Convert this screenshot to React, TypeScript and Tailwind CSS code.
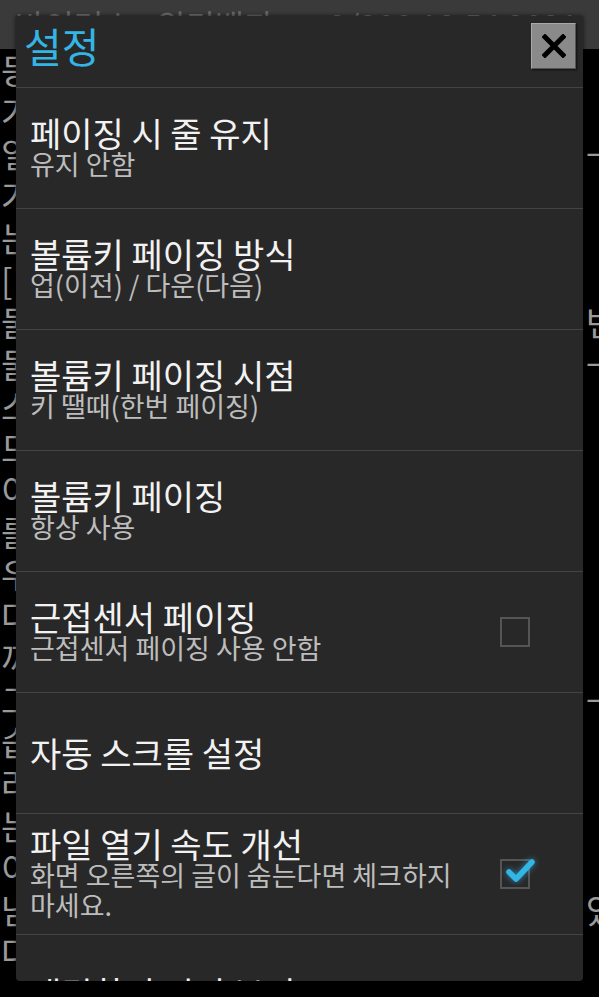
import React from "react";

const leftChars = ["등","가","일","가","는","[","물","물","스","므","이","를","우","다","까","그","습","라","는","이","남","다"];
const rightChars: Record<number, string> = { 2: "ㅡ", 6: "번", 7: "ㅡ", 12: "ㅣ", 15: "ㅡ", 20: "있" };

type Row = { title: string; sub?: React.ReactNode; check?: "on" | "off" };

const rows: Row[] = [
  { title: "페이징 시 줄 유지", sub: "유지 안함" },
  { title: "볼륨키 페이징 방식", sub: "업(이전) / 다운(다음)" },
  { title: "볼륨키 페이징 시점", sub: "키 땔때(한번 페이징)" },
  { title: "볼륨키 페이징", sub: "항상 사용" },
  { title: "근접센서 페이징", sub: "근접센서 페이징 사용 안함", check: "off" },
  { title: "자동 스크롤 설정" },
  {
    title: "파일 열기 속도 개선",
    sub: (
      <>
        화면 오른쪽의 글이 숨는다면 체크하지
        <br />
        마세요.
      </>
    ),
    check: "on",
  },
];

const FONT = { fontFamily: '"Noto Sans CJK KR", "Noto Sans", sans-serif' };

function CheckBox({ on }: { on: boolean }) {
  return (
    <div className="relative w-[30px] h-[30px] border-2 border-[#555555] shrink-0">
      {on && (
        <svg
          className="absolute left-[-2px] top-[-2px] overflow-visible"
          width="40"
          height="30"
          viewBox="0 0 40 30"
          style={{ filter: "drop-shadow(0 0 3px rgba(51,181,229,0.7))" }}
        >
          <polyline
            points="9,13 16,20 32,3"
            fill="none"
            stroke="#33b5e5"
            strokeWidth="5.5"
            strokeLinecap="round"
            strokeLinejoin="round"
          />
        </svg>
      )}
    </div>
  );
}

export default function App() {
  return (
    <div className="relative w-[599px] h-[997px] bg-black overflow-hidden" style={FONT}>
      {/* background reader page */}
      <div className="h-[49px] bg-[#3a3a3a] flex justify-between items-start pt-[4px] px-[15px] text-[32px] leading-[40px] text-[#6c6c6c]">
        <span>바이러스 : 위키백과</span>
        <span className="mr-[6px]">9/200 18:54 2021</span>
      </div>
      <div className="flex flex-col text-[34px] leading-[42px] text-[#9a9a9a]">
        {leftChars.map((c, i) => (
          <div key={i} className="flex justify-between pl-[1px] mr-[-18px]">
            <span>{c}</span>
            <span>{rightChars[i] ?? ""}</span>
          </div>
        ))}
      </div>

      {/* dialog */}
      <div className="absolute left-[16px] top-[16px] w-[567px] h-[965px] bg-[#282828] rounded-b-[4px] shadow-[0_0_4px_rgba(0,0,0,0.7)] overflow-hidden flex flex-col">
        <div className="h-[71px] shrink-0 flex justify-between items-start">
          <div className="pl-[8px] pt-[0px] text-[41px] leading-[58px] text-[#33b5e5]">설정</div>
          <div className="mt-[7px] mr-[7px] w-[45px] h-[46px] bg-[#8a8a8a] border border-t-[#a8a8a8] border-l-[#a8a8a8] border-r-[#555555] border-b-[#555555] shadow-[1px_1px_2px_rgba(0,0,0,0.6)] flex items-center justify-center">
            <svg width="24" height="24" viewBox="0 0 24 24">
              <path d="M3 3 L21 21 M21 3 L3 21" stroke="#000" strokeWidth="5" strokeLinecap="square" />
            </svg>
          </div>
        </div>
        <div className="h-px bg-[#434343] shrink-0" />
        {rows.map((r, i) => (
          <React.Fragment key={i}>
            <div className="h-[120px] shrink-0 flex items-center justify-between pl-[14px] pr-[53px]">
              <div className="flex flex-col">
                <div className="text-[34px] leading-[32px] text-[#f2f2f2]">{r.title}</div>
                {r.sub && <div className="text-[27px] leading-[30px] text-[#bdbdbd]">{r.sub}</div>}
              </div>
              {r.check && <CheckBox on={r.check === "on"} />}
            </div>
            <div className="h-px bg-[#434343] shrink-0" />
          </React.Fragment>
        ))}
        <div className="pl-[14px] pt-[42px] text-[34px] leading-[32px] text-[#f2f2f2] shrink-0">배경화면 미리 보기</div>
      </div>
    </div>
  );
}
